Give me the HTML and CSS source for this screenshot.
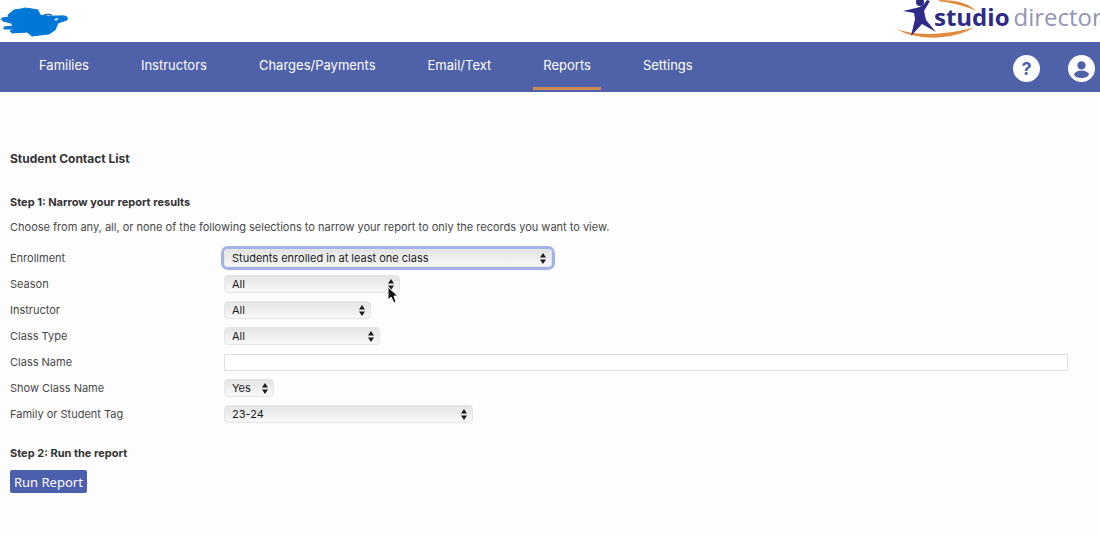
FILE: index.html
```html
<!DOCTYPE html>
<html lang="en">
  <head>
    <meta charset="UTF-8" />
    <meta name="viewport" content="width=device-width, initial-scale=1" />
    <title>Student Contact List</title>
    <link rel="stylesheet" href="styles.css" />
  </head>

  <body>
    <!-- shared up/down arrows for the drop-downs -->
    <svg class="symbols" aria-hidden="true">
      <symbol id="arrows" viewBox="0 0 6 11">
        <path d="M3 0L6 4.6H0zM3 11L0 6.4H6z" />
      </symbol>
    </svg>

    <header class="header">
      <svg class="studio-mark" viewBox="0 0 70 38" aria-hidden="true">
        <path fill="#0078d7" stroke="#0078d7" stroke-linejoin="round" d="M2 18L9 17L8 15L14 10L21 9L25 8L32 9L38 10L40 15L48 16L60 16Q69 15 67 20L58 23L55 30L49 34L40 35L32 36L27 32L12 33L10 31L14 29L4 29L4 27L13 26L11 23L3 21Q1 20 2 18z" />
        <path fill="#dff1ff" d="M54 19L59 18L56 21z" />
        <path fill="none" stroke="#173f72" d="M44 15Q48 13 52 15" />
      </svg>
      <a class="logo" href="#" aria-label="studio director">
        <svg class="logo-figure" viewBox="0 0 90 42" aria-hidden="true">
          <path fill="#e28a3c" d="M44 0Q70 0 80 11Q66 4 42 1zM0 29Q20 36 48 33Q66 31 79 27Q66 35 47 37Q20 40 0 29z" />
          <circle cx="24" cy="2" r="4" fill="#2d2b87" />
          <path fill="#2d2b87" d="M7 11L20 8Q25 7 28 4L31 0L34 1L28 11L30 20L40 32L26 24L15 36L19 19L18 13z" />
        </svg>
        <span class="logo-text"><b>studio</b><span>director</span></span>
      </a>
    </header>

    <nav class="nav">
      <a href="#">Families</a>
      <a href="#">Instructors</a>
      <a href="#">Charges/Payments</a>
      <a href="#">Email/Text</a>
      <a href="#" class="active">Reports</a>
      <a href="#">Settings</a>
      <div class="nav-icons">
        <button type="button" class="help" aria-label="Help">?</button>
        <button type="button" aria-label="Account">
          <svg viewBox="0 0 26 26" aria-hidden="true">
            <circle cx="13" cy="10" r="4" />
            <ellipse cx="13" cy="18.6" rx="7" ry="3.6" />
          </svg>
        </button>
      </div>
    </nav>

    <main class="content">
      <h1>Student Contact List</h1>
      <h2>Step 1: Narrow your report results</h2>
      <p>Choose from any, all, or none of the following selections to narrow your report to only the records you want to view.</p>

      <form>
        <div class="row">
          <label for="enrollment">Enrollment</label>
          <div class="select enrollment focused">
            <select id="enrollment"><option>Students enrolled in at least one class</option></select>
            <svg class="arrows"><use href="#arrows" /></svg>
          </div>
        </div>
        <div class="row">
          <label for="season">Season</label>
          <div class="select season">
            <select id="season"><option>All</option></select>
            <svg class="arrows"><use href="#arrows" /></svg>
            <svg class="cursor" viewBox="0 0 12 18" aria-hidden="true">
              <path fill="#111" stroke="#fff" d="M1 1V14L4 11L7 17L9 16L7 10H11z" />
            </svg>
          </div>
        </div>
        <div class="row">
          <label for="instructor">Instructor</label>
          <div class="select instructor">
            <select id="instructor"><option>All</option></select>
            <svg class="arrows"><use href="#arrows" /></svg>
          </div>
        </div>
        <div class="row">
          <label for="class-type">Class Type</label>
          <div class="select class-type">
            <select id="class-type"><option>All</option></select>
            <svg class="arrows"><use href="#arrows" /></svg>
          </div>
        </div>
        <div class="row">
          <label for="class-name">Class Name</label>
          <input type="text" id="class-name" />
        </div>
        <div class="row">
          <label for="show-class">Show Class Name</label>
          <div class="select show-class">
            <select id="show-class"><option>Yes</option></select>
            <svg class="arrows"><use href="#arrows" /></svg>
          </div>
        </div>
        <div class="row">
          <label for="tag">Family or Student Tag</label>
          <div class="select tag">
            <select id="tag"><option>23-24</option></select>
            <svg class="arrows"><use href="#arrows" /></svg>
          </div>
        </div>

        <h2 class="step-two">Step 2: Run the report</h2>
        <button type="submit" class="run">Run Report</button>
      </form>
    </main>
  </body>
</html>
```

FILE: styles.css
```css
* {
  box-sizing: border-box;
}

body {
  margin: 0;
  background: #fdfdfd;
  color: #484848;
  font-family: Inter, "Liberation Sans", sans-serif;
  font-size: 11px;
}

.symbols {
  position: absolute;
  width: 0;
  height: 0;
}

.header {
  display: flex;
  justify-content: space-between;
  height: 42px;
  overflow: hidden;
  background: #fff;
}

.studio-mark {
  width: 70px;
  height: 38px;
}

.logo {
  position: relative;
  width: 204px;
  padding-left: 38px;
  text-decoration: none;
  white-space: nowrap;
}

.logo-figure {
  position: absolute;
  left: 0;
  top: 0;
  width: 90px;
  height: 42px;
}

.logo-text {
  position: relative;
  display: flex;
  gap: 4px;
  color: #9295b4;
  font-family: "Open Sans", sans-serif;
  font-size: 24px;
  line-height: 34px;
}

.logo-text b {
  color: #2d2b87;
}

.nav {
  display: flex;
  gap: 32px;
  height: 50px;
  padding-left: 29px;
  background: #4f61a8;
}

.nav a {
  height: 48px;
  padding: 0 10px;
  border-bottom: 3px solid transparent;
  color: #fff;
  font-size: 13px;
  line-height: 46px;
  text-decoration: none;
}

.nav a.active {
  border-color: #cf8b54;
}

.nav-icons {
  display: flex;
  align-items: center;
  gap: 28px;
  margin-left: auto;
  padding: 2px 5px 0 0;
}

.nav-icons button {
  width: 27px;
  height: 27px;
  padding: 0;
  border: 0;
  border-radius: 50%;
  background: #fff;
  color: #4f61a8;
  fill: #4f61a8;
}

.nav-icons svg {
  display: block;
  width: 100%;
}

.nav-icons .help {
  font: bold 18px Inter, sans-serif;
}

.content {
  padding: 59px 32px 32px 10px;
}

h1,
h2,
p {
  margin: 0;
}

h1 {
  margin-bottom: 27px;
  color: #333;
  font-size: 12px;
  line-height: 16px;
}

h2 {
  margin-bottom: 9px;
  color: #333;
  font-size: 11px;
  line-height: 16px;
}

p {
  margin-bottom: 10px;
  line-height: 16px;
}

.row {
  display: grid;
  grid-template-columns: 214px 1fr;
  align-items: center;
  height: 26px;
}

.select {
  position: relative;
  height: 18px;
}

.select select {
  display: block;
  width: 100%;
  height: 100%;
  padding: 0 7px;
  border: 1px solid #e6e6e6;
  border-radius: 4px;
  outline: none;
  appearance: none;
  background: linear-gradient(#e4e4e4, #f8f8f8);
  color: #1c1c1c;
  font: 11px Inter, "Liberation Sans", sans-serif;
}

.focused select {
  box-shadow: 0 0 0 3px #a3b2e8;
}

.arrows {
  position: absolute;
  top: 4px;
  right: 6px;
  width: 6px;
  height: 11px;
  fill: #1c1c1c;
  pointer-events: none;
}

.cursor {
  position: absolute;
  top: 11px;
  right: 1px;
  z-index: 1;
  width: 12px;
  height: 18px;
}

.enrollment {
  width: 328px;
}

.season {
  width: 176px;
}

.instructor {
  width: 147px;
}

.class-type {
  width: 156px;
}

.show-class {
  width: 50px;
}

.tag {
  width: 249px;
}

.row input {
  width: 100%;
  height: 17px;
  padding: 0 4px;
  border: 1px solid #e0e0e0;
  background: #fff;
  font-size: 11px;
}

.step-two {
  margin: 18px 0 9px;
}

.run {
  height: 23px;
  padding: 0 4px;
  border: 0;
  border-radius: 2px;
  background: #4c5fad;
  color: #fff;
  font: 13px "Noto Sans", sans-serif;
}
```
